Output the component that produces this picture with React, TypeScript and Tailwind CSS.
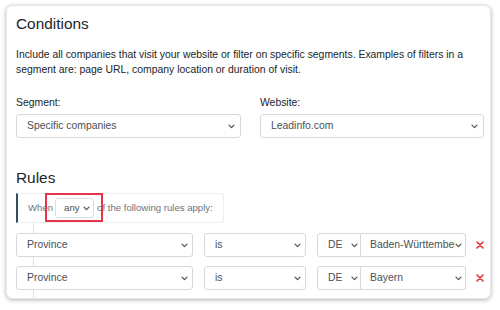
import React from "react";

const Chevron = () => (
  <svg width="7" height="5" viewBox="0 0 7 5" className="shrink-0">
    <path d="M1 1.2 L3.5 3.7 L6 1.2" fill="none" stroke="#4a4f55" strokeWidth="1.2" strokeLinecap="round" strokeLinejoin="round" />
  </svg>
);

function Select({
  text,
  className,
  textPad = "pl-[10px]",
}: {
  text: string;
  className: string;
  textPad?: string;
}) {
  return (
    <div className={`flex shrink-0 items-center bg-white border border-[#d5d9dd] h-[24px] ${className}`}>
      <div className={`flex-1 min-w-0 overflow-hidden whitespace-nowrap text-[#495057] text-[10.4px] leading-none ${textPad}`}>
        {text}
      </div>
      <Chevron />
    </div>
  );
}

function XIcon() {
  return (
    <svg width="8" height="8" viewBox="0 0 8 8" className="ml-[10px] shrink-0">
      <path d="M1 1 L7 7 M7 1 L1 7" stroke="#e3342f" strokeWidth="1.6" strokeLinecap="round" />
    </svg>
  );
}

function RuleRow({ value }: { value: string }) {
  return (
    <div className="flex items-center">
      <Select text="Province" className="w-[177px] rounded-[3px] pr-[4px]" textPad="pl-[10px]" />
      <Select text="is" className="w-[102px] rounded-[3px] ml-[11px] pr-[4px]" />
      <div className="flex shrink-0 ml-[11px]">
        <Select text="DE" className="w-[44px] rounded-l-[3px] pr-[2px]" />
        <Select text={value} className="w-[105px] rounded-r-[3px] border-l-0 pr-[3px]" textPad="pl-[9px] pr-[5px]" />
      </div>
      <XIcon />
    </div>
  );
}

export default function App() {
  return (
    <div
      className="w-[500px] h-[310px] bg-white pt-[5px] pl-[6px] text-[#212529]"
      style={{ fontFamily: '"Liberation Sans", Arial, sans-serif' }}
    >
      <div className="w-[485px] h-[294px] rounded-[6px] bg-white border border-[#e6e6e6] shadow-[0_1px_4px_rgba(0,0,0,0.3)] pl-[9px] pr-[6px] pt-[9px] relative overflow-hidden">
        <h4 className="text-[15.4px] leading-[18px] font-medium">Conditions</h4>
        <p className="mt-[13.5px] text-[10.4px] leading-[15px] w-[460px]">
          Include all companies that visit your website or filter on specific segments. Examples of filters in a
          segment are: page URL, company location or duration of visit.
        </p>
        <div className="grid grid-cols-[225px_224px] gap-x-[19px] mt-[18px]">
          <div>
            <div className="text-[10.4px] leading-[15px]">Segment:</div>
            <Select text="Specific companies" className="mt-[4.5px] rounded-[3px] w-[225px] pr-[5px]" textPad="pl-[10px]" />
          </div>
          <div>
            <div className="text-[10.4px] leading-[15px]">Website:</div>
            <Select text="Leadinfo.com" className="mt-[4.5px] rounded-[3px] w-[224px] pr-[5px]" textPad="pl-[10px]" />
          </div>
        </div>
        <h4 className="mt-[31px] text-[15.4px] leading-[18px] font-medium">Rules</h4>
        <div className="relative mt-[6px]">
          <div className="absolute left-[17px] top-[28px] bottom-[-20px] w-px bg-[#dee2e6]" />
          <div className="relative flex w-fit items-center h-[30px] whitespace-nowrap border border-[#eceeef] border-l-[2px] border-l-[#34505f] rounded-r-[3px] bg-white pl-[10px] pr-[10px] text-[9.6px] text-[#6c757d]">
            <span>When</span>
            <div className="flex shrink-0 items-center ml-[2px] w-[39px] h-[20px] border border-[#dcdfe2] rounded-[3px] pl-[8px] pr-[3px]">
              <span className="flex-1 text-[#495057]">any</span>
              <Chevron />
            </div>
            <span className="ml-[3px]">of the following rules apply:</span>
            <div className="absolute left-[27px] top-[-1px] w-[58px] h-[29px] border-2 border-[#e8334a]" />
          </div>
          <div className="relative flex flex-col gap-[9px] mt-[10px]">
            <RuleRow value="Baden-Württemberg" />
            <RuleRow value="Bayern" />
          </div>
        </div>
      </div>
    </div>
  );
}
